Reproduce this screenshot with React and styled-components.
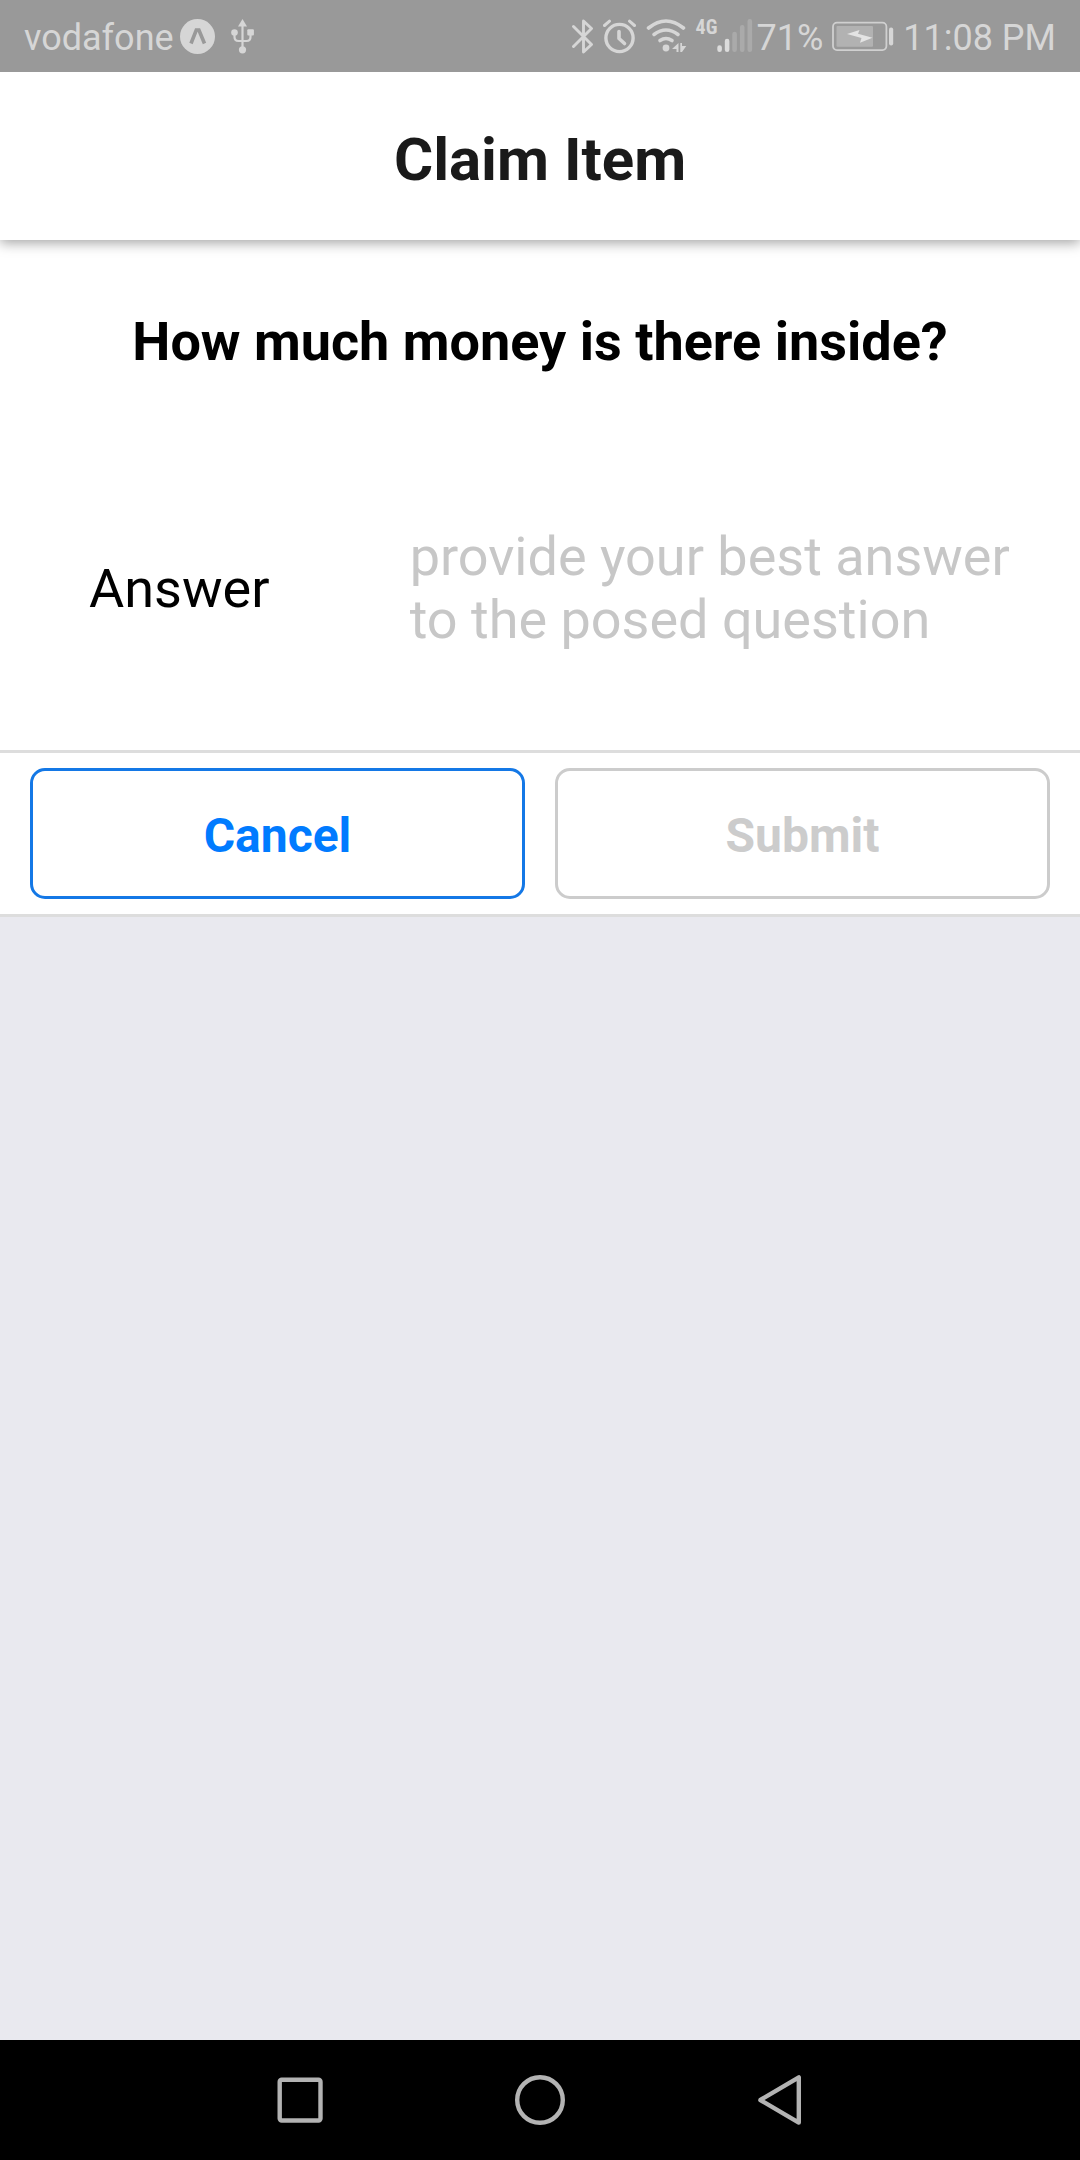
import React, { useState } from "react";
import styled, { createGlobalStyle } from "styled-components";

const GlobalStyle = createGlobalStyle`
  *, *::before, *::after { box-sizing: border-box; }
  body {
    margin: 0;
    background: #e9e9ef;
    font-family: Roboto, "Noto Sans", sans-serif;
  }
`;

const Screen = styled.div`
  display: flex;
  flex-direction: column;
  min-height: 100vh;
`;

const StatusBar = styled.div`
  position: relative;
  z-index: 2;
  display: flex;
  align-items: center;
  justify-content: space-between;
  height: 72px;
  padding: 0 24px;
  background: #999999;
  color: #d6d6d6;
  font-size: 36px;
  line-height: 72px;
`;

const StatusGroup = styled.div`
  display: flex;
  align-items: center;
  gap: ${(p) => p.$gap}px;
`;

const StatusText = styled.span`
  padding-top: 3px;
  white-space: nowrap;
`;

const StatusIcon = styled.svg`
  display: block;
  flex: none;
  height: 72px;
`;

const Signal = styled.div`
  display: flex;
  height: 72px;
`;

const NetworkType = styled.span`
  padding-top: 16px;
  font-family: "Roboto Condensed", "Liberation Sans Narrow", Roboto, sans-serif;
  font-size: 20px;
  font-weight: 700;
  line-height: 22px;
`;

const Header = styled.header`
  position: relative;
  z-index: 1;
  padding: 53px 24px 45px;
  background: #ffffff;
  box-shadow: 0 3px 12px rgba(0, 0, 0, 0.36);
`;

const Title = styled.h1`
  margin: 0;
  color: #1a1a1a;
  font-size: 60px;
  font-weight: 700;
  line-height: 70px;
  text-align: center;
`;

const Form = styled.form`
  display: flex;
  flex-direction: column;
  background: #ffffff;
`;

const Question = styled.h2`
  margin: 0;
  padding: 70px 24px 52px;
  color: #000000;
  font-size: 54px;
  font-weight: 700;
  line-height: 64px;
  text-align: center;
`;

const Field = styled.div`
  display: grid;
  grid-template-columns: 1fr 2fr;
  align-items: center;
  padding: 99px 29px 99px 89px;
`;

const Label = styled.label`
  padding-top: 2px;
  color: #000000;
  font-size: 54px;
  line-height: 64px;
`;

const AnswerBox = styled.textarea`
  display: block;
  width: 100%;
  height: 126px;
  margin: 0;
  padding: 0;
  border: 0;
  outline: 0;
  resize: none;
  overflow: hidden;
  background: transparent;
  color: #000000;
  font: 400 54px/63px Roboto, "Noto Sans", sans-serif;

  &::placeholder {
    color: #c7c7c7;
    opacity: 1;
  }
`;

const Actions = styled.div`
  display: flex;
  gap: 30px;
  padding: 15px 30px;
  border-top: 3px solid #dddddd;
  border-bottom: 3px solid #dddddd;
`;

const ActionButton = styled.button`
  flex: 1;
  height: 131px;
  padding: 5px 0 0;
  border: 3px solid ${(p) => p.$border};
  border-radius: 15px;
  background: #ffffff;
  color: ${(p) => p.$color};
  font: 700 48px/56px Roboto, "Noto Sans", sans-serif;
`;

const NavBar = styled.nav`
  display: flex;
  justify-content: center;
  margin-top: auto;
  height: 120px;
  background: #000000;
`;

const NavButton = styled.button`
  display: flex;
  align-items: center;
  justify-content: center;
  width: 240px;
  padding: 0;
  border: 0;
  background: transparent;
`;

const NavIcon = ({ children }) => (
  <svg width="60" height="60" viewBox="0 0 60 60" fill="none" stroke="#b3b3b3" strokeWidth="4.4" strokeLinejoin="round" aria-hidden="true">
    {children}
  </svg>
);

const ExpoIcon = () => (
  <StatusIcon width="35" viewBox="180 0 35 72">
    <circle cx="197.5" cy="36.5" r="17.5" fill="#d6d6d6" />
    <path d="M191 43.5 L196.3 30 H198.9 L204.5 43.5" fill="none" stroke="#999999" strokeWidth="3.6" />
  </StatusIcon>
);

const UsbIcon = () => (
  <StatusIcon width="24" viewBox="231 0 24 72" fill="#d6d6d6">
    <path d="M242.5 19 L247 26.5 H238 Z" />
    <path d="M242.5 24 V48 M234.5 33 V37 Q234.5 41 238.5 41 H246.5 Q250.5 41 250.5 37 V33" fill="none" stroke="#d6d6d6" strokeWidth="2.2" />
    <circle cx="234.5" cy="32.5" r="3.3" />
    <rect x="247.3" y="29.2" width="6.6" height="6.2" rx="1" />
    <circle cx="242.5" cy="49.8" r="3.6" />
  </StatusIcon>
);

const BluetoothIcon = () => (
  <StatusIcon width="22" viewBox="573 0 22 72" fill="none" stroke="#d6d6d6" strokeWidth="2.9" strokeLinejoin="round" strokeLinecap="round">
    <path d="M574.5 26.5 L592.5 44.5 L584.5 52 V21 L592.5 28.5 L574.5 46.5" />
  </StatusIcon>
);

const AlarmIcon = () => (
  <StatusIcon width="34" viewBox="606 0 34 72" fill="none" stroke="#d6d6d6" strokeLinecap="round" strokeLinejoin="round">
    <circle cx="622.5" cy="38" r="13.6" strokeWidth="3.4" />
    <path d="M622 31.5 V38.5 L627.5 43.5" strokeWidth="3.6" />
    <path d="M607.5 25.5 L612.5 21.2 M637.5 25.5 L632.5 21.2" strokeWidth="3" />
  </StatusIcon>
);

const WifiIcon = () => (
  <StatusIcon width="41" viewBox="648 0 41 72" fill="none" stroke="#d6d6d6" strokeWidth="3.6" strokeLinecap="round">
    <path d="M650.5 28 Q668 14 685.5 28" />
    <path d="M656 34.5 Q668 25.5 680 34.5" />
    <path d="M662 40.5 Q668 36.5 674 40.5" />
    <circle cx="668" cy="48" r="3.4" fill="#d6d6d6" stroke="none" />
    <path d="M680.5 43 V52 H678.5 V49 H674 Z M682.3 43 V52 H684 L688.3 46 H684 V43 Z" fill="#d6d6d6" stroke="none" />
  </StatusIcon>
);

const SignalIcon = () => (
  <StatusIcon width="36" viewBox="716 0 36 72" fill="none" strokeWidth="4.6" strokeLinecap="round">
    <path d="M718.6 47.5 V49.8 M726.1 41 V49.8" stroke="#dcdcdc" />
    <path d="M733.6 34 V49.8 M741.2 27.3 V49.8 M748.8 21.3 V49.8" stroke="#aaaaaa" />
  </StatusIcon>
);

const BatteryIcon = () => (
  <StatusIcon width="62" viewBox="832 0 62 72">
    <rect x="833" y="22.7" width="53.4" height="27.4" rx="4" fill="none" stroke="#d0d0d0" strokeWidth="1.8" />
    <rect x="836.5" y="26" width="36.5" height="20.7" rx="1" fill="#b2b2b2" />
    <path d="M847 34 L861.5 38 L860 42.8 L872.5 37.8 L858 33.8 L859.5 30 Z" fill="#e4e4e4" />
    <rect x="889" y="27.5" width="4.2" height="18" rx="2" fill="#d6d6d6" />
  </StatusIcon>
);

export default function App() {
  const [answer, setAnswer] = useState("");
  const ready = answer.trim().length > 0;

  return (
    <Screen>
      <GlobalStyle />
      <StatusBar>
        <StatusGroup $gap={6}>
          <StatusText>vodafone</StatusText>
          <StatusGroup $gap={16}>
            <ExpoIcon />
            <UsbIcon />
          </StatusGroup>
        </StatusGroup>
        <StatusGroup $gap={9}>
          <BluetoothIcon />
          <AlarmIcon />
          <WifiIcon />
          <StatusGroup $gap={3}>
            <Signal>
              <NetworkType>4G</NetworkType>
              <SignalIcon />
            </Signal>
            <StatusText>71%</StatusText>
          </StatusGroup>
          <BatteryIcon />
          <StatusText>11:08 PM</StatusText>
        </StatusGroup>
      </StatusBar>

      <Header>
        <Title>Claim Item</Title>
      </Header>

      <Form onSubmit={(e) => e.preventDefault()}>
        <Question>How much money is there inside?</Question>
        <Field>
          <Label htmlFor="answer">Answer</Label>
          <AnswerBox
            id="answer"
            placeholder="provide your best answer to the posed question"
            value={answer}
            onChange={(e) => setAnswer(e.target.value)}
          />
        </Field>
        <Actions>
          <ActionButton type="button" $border="#1478e6" $color="#007bff" onClick={() => setAnswer("")}>
            Cancel
          </ActionButton>
          <ActionButton
            type="submit"
            disabled={!ready}
            $border={ready ? "#1478e6" : "#cccccc"}
            $color={ready ? "#007bff" : "#cccccc"}
          >
            Submit
          </ActionButton>
        </Actions>
      </Form>

      <NavBar>
        <NavButton type="button" aria-label="Recent apps">
          <NavIcon>
            <rect x="9.7" y="9.7" width="40.8" height="40.8" rx="2" />
          </NavIcon>
        </NavButton>
        <NavButton type="button" aria-label="Home">
          <NavIcon>
            <circle cx="30" cy="30" r="22.8" />
          </NavIcon>
        </NavButton>
        <NavButton type="button" aria-label="Back">
          <NavIcon>
            <path d="M48.8 7.4 V52.6 L10.4 30 Z" />
          </NavIcon>
        </NavButton>
      </NavBar>
    </Screen>
  );
}
